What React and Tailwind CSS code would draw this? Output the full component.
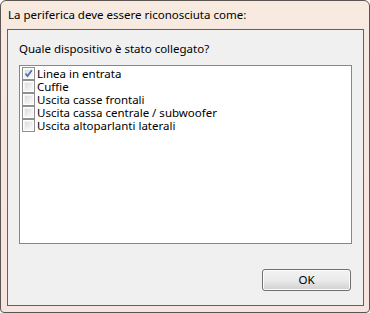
import React from "react";

const items = [
  { label: "Linea in entrata", checked: true },
  { label: "Cuffie", checked: false },
  { label: "Uscita casse frontali", checked: false },
  { label: "Uscita cassa centrale / subwoofer", checked: false },
  { label: "Uscita altoparlanti laterali", checked: false },
];

const CheckBox = ({ checked }) => (
  <span className="w-[13px] h-[13px] shrink-0 border border-[#8e8f8f] bg-white p-px flex">
    <span className="flex-1 bg-gradient-to-br from-[#dcdcdc] to-[#fafafa] border border-[#f4f4f4] relative">
      {checked && (
        <svg
          viewBox="0 0 9 9"
          className="absolute -left-px -top-px w-[9px] h-[9px]"
        >
          <path
            d="M1.5 4.5 L3.5 7 L7.8 1.2"
            fill="none"
            stroke="#4a6fb5"
            strokeWidth="1.7"
          />
        </svg>
      )}
    </span>
  </span>
);

export default function App() {
  return (
    <div
      className="w-[370px] h-[313px] bg-gradient-to-b from-[#f7eadf] to-[#f6e4df] border border-[#5c5552] rounded-t-[6px] rounded-b-[4px] flex flex-col text-[11.5px] text-black"
      style={{ fontFamily: '"Noto Sans", "Open Sans", sans-serif' }}
    >
      {/* Window caption */}
      <div className="h-[28px] pl-[7px] flex items-center">
        <span className="leading-none">
          La periferica deve essere riconosciuta come:
        </span>
      </div>

      {/* Client area */}
      <div className="ml-[6px] mr-[5px] h-[277px] border border-[#63605e] bg-[#f0f0f0] flex flex-col px-[11px]">
        <div className="h-[35px] flex items-center pt-[3px]">
          Quale dispositivo è stato collegato?
        </div>

        <div className="h-[179px] border border-[#828790] bg-white pt-px px-px">
          {items.map((item) => (
            <div
              key={item.label}
              className="h-[13px] flex items-center gap-[2px] pl-px leading-none"
            >
              <CheckBox checked={item.checked} />
              <span className="leading-[11px]">{item.label}</span>
            </div>
          ))}
        </div>

        <div className="flex justify-end pt-[25px] pr-[1px]">
          <button className="w-[89px] h-[22px] rounded-[3px] border border-[#707070] bg-gradient-to-b from-[#f2f2f2] via-[#ebebeb] to-[#d0d0d0] flex items-center justify-center shadow-[inset_0_0_0_1px_#fcfcfc]">
            OK
          </button>
        </div>
      </div>
    </div>
  );
}
